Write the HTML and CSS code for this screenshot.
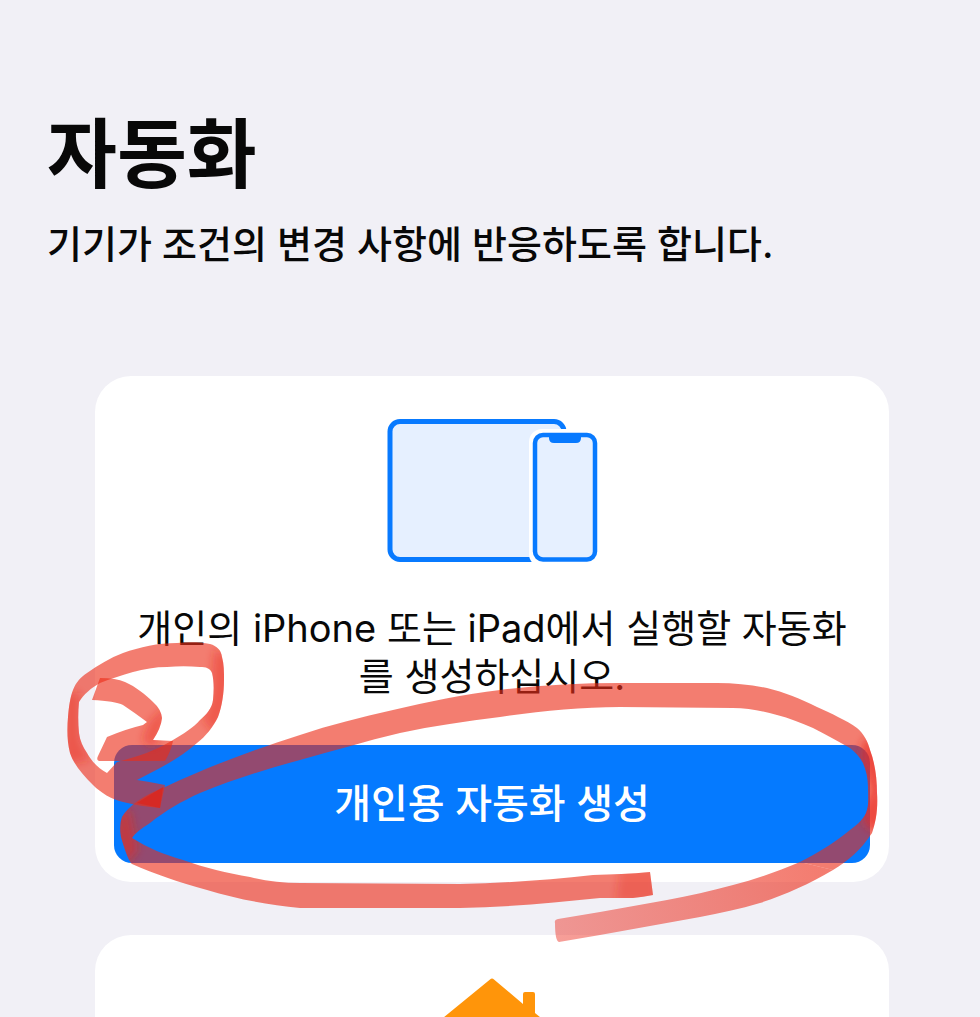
FILE: index.html
```html
<!DOCTYPE html>
<html lang="ko">
<head>
  <meta charset="UTF-8" />
  <meta name="viewport" content="width=device-width, initial-scale=1" />
  <title>자동화</title>
  <link rel="stylesheet" href="styles.css">
</head>
<body>
  <main class="page">
    <header class="intro">
      <h1>자동화</h1>
      <p>기기가 조건의 변경 사항에 반응하도록 합니다.</p>
    </header>

    <div class="cards">
      <section class="card">
        <svg class="devices" width="212" height="144" viewBox="0 0 212 144" aria-hidden="true">
          <rect x="4" y="2.500" width="174" height="138" rx="10" fill="#e6f0ff" stroke="#087aff" stroke-width="5" />
          <rect x="143" y="10" width="72" height="138" rx="13" fill="#fff" />
          <rect x="149" y="16" width="60" height="124.500" rx="8" fill="#e6f0ff" stroke="#087aff" stroke-width="4.500" />
          <path d="M163 16h32v3q0 5-5 5h-22q-5 0-5-5z" fill="#087aff" />
        </svg>
        <p class="description">개인의 iPhone 또는 iPad에서 실행할 자동화를 생성하십시오.</p>
        <button class="create-btn" type="button">개인용 자동화 생성</button>
      </section>

      <section class="card">
        <svg class="home" width="140" height="110" viewBox="0 0 140 110" aria-hidden="true">
          <path d="M68 1.500q2-2 4 0L101 26V16q0-2 2-2h8q2 0 2 2v19l22 18v4h-12v53H17V57H5v-4z" fill="#ff950a" />
        </svg>
      </section>
    </div>

    <!-- Red marker strokes -->
    <svg class="marker" width="980" height="1017" viewBox="0 0 980 1017" aria-hidden="true">
      <defs>
        <linearGradient id="fade" gradientUnits="userSpaceOnUse" x1="555" y1="930" x2="815" y2="866">
          <stop offset="0" stop-color="#ec2d20" stop-opacity=".46" />
          <stop offset="1" stop-color="#ec2d19" stop-opacity=".62" />
        </linearGradient>
        <filter id="soft" x="-50%" y="-50%" width="200%" height="200%">
          <feGaussianBlur stdDeviation="4" />
        </filter>
        <path id="ring" d="M165 785L160 808C147 807 135 805 123 802C111 799 101 793 93 785C83 775 74 765 70 753C67 741 67 729 68 717C69 706 70 698 73 690C76 682 81 677 87 673C98 665 110 658 123 653C140 647 158 643 177 643C189 642 200 642 210 644C217 646 221 650 222 657C224 664 224 672 224 680C224 693 222 706 218 717C213 727 206 736 197 743C186 753 173 761 160 768L137 780Q151 782 165 785ZM117 762C137 757 157 750 173 740C183 734 193 728 200 720C207 714 212 708 213 700C214 690 214 681 212 673C210 668 206 667 200 667C189 666 178 666 167 667C155 667 144 669 133 672C122 675 110 679 100 683C91 688 84 694 79 702C78 712 78 723 79 733C80 741 83 747 87 753C92 762 99 769 107 773Z" />
        <path id="arrow" d="M100 678Q116 678 125 682C136 687 145 694 153 702Q161 709 162 718Q161 728 153 740L173 741Q171 751 165 761L99 761Q96 760 98 756L107 737Q126 729 143 725L147 722Q135 713 123 705Q115 701 92 700Q96 689 100 678Z" />
        <path id="loop" d="M165 787C210 766 255 749 300 735C330 725 361 717 393 710C428 702 464 694 500 690C540 685 580 683 620 683L717 683C735 683 751 685 767 688C784 692 801 699 817 707C832 714 846 720 857 728C864 734 868 742 870 750C875 763 877 779 877 793C878 809 876 821 872 833C861 850 848 861 833 870L800 862C818 853 834 843 850 830C858 824 865 818 867 810C869 803 868 795 868 787C868 778 866 770 863 763C860 757 855 752 850 748C838 741 826 735 813 728C801 723 789 718 777 715C763 711 748 708 733 708L620 707C580 707 540 711 500 717C466 721 433 726 400 733C366 741 333 751 300 760C266 769 232 780 200 793C182 801 165 811 150 823C142 828 135 833 132 838C148 848 165 855 183 860C205 868 227 873 250 877C266 881 283 883 300 883L460 884C505 883 549 880 593 875C612 874 631 874 650 872L653 895Q643 897 633 898L600 898C553 903 507 907 460 908L300 908C268 905 237 899 207 890C178 882 155 874 132 864Q128 861 121 837Q119 825 122 817Q132 800 165 787Z" />
        <clipPath id="strokes">
          <use href="#ring" clip-rule="evenodd" />
          <use href="#arrow" />
          <use href="#loop" />
        </clipPath>
      </defs>
      <g fill="#ec2d19" fill-opacity=".62">
        <use href="#ring" fill-rule="evenodd" />
        <use href="#arrow" />
        <use href="#loop" />
      </g>
      <path d="M833 870C809 884 785 895 760 903C740 909 720 913 700 917L600 935L559 942Q555 941 555 923Q554 920 558 919L600 912L667 900C689 896 711 891 733 885C756 879 779 871 800 862Z" fill="url(#fade)" />
      <path d="M163 787L160 808L137 803Z" fill="#dd2018" fill-opacity=".6" />
      <!-- Denser ink where the pen turns -->
      <g clip-path="url(#strokes)">
        <g fill="#e92a1a" filter="url(#soft)">
          <path d="M620 868H658V902H616Z" fill-opacity=".3" />
          <path d="M214 650L232 655V700L216 735L203 720Q214 696 212 672Z" fill-opacity=".4" />
          <path d="M64 693H80V740L90 760L64 765Z" fill-opacity=".4" />
          <path d="M864 738L882 745V833L866 827L862 812L872 790L860 757Z" fill-opacity=".6" />
          <path d="M118 811H130L138 850L126 864L116 840Z" fill-opacity=".5" />
          <path d="M149 722L166 705V722L154 748L142 741Z" fill-opacity=".4" />
        </g>
      </g>
    </svg>
  </main>
</body>
</html>
```

FILE: styles.css
```css
* {
  margin: 0;
  padding: 0;
  box-sizing: border-box;
}

body {
  background: #f1f0f6;
  color: #080808;
  font-family: Inter, 'Noto Sans CJK KR', sans-serif;
}

.page {
  position: relative;
  height: 100vh;
  padding: 100px 47px 0;
  overflow: hidden;
}

.intro h1 {
  font-size: 76px;
  line-height: 108px;
  font-weight: 700;
}

.intro p {
  margin-top: 12px;
  font-size: 38px;
  line-height: 48px;
  font-weight: 500;
}

.cards {
  display: flex;
  flex-direction: column;
  gap: 53px;
  margin-top: 108px;
  padding: 0 44px 0 48px;
}

.card {
  display: flex;
  flex-direction: column;
  align-items: center;
  padding: 43px 19px 19px;
  background: #fff;
  border-radius: 36px;
}

.description {
  margin: 41px 0 45px;
  padding: 0 18px;
  font-size: 38px;
  line-height: 48px;
  text-align: center;
}

.create-btn {
  width: 100%;
  height: 118px;
  padding-bottom: 6px;
  border: none;
  border-radius: 18px;
  background: #057aff;
  color: #fff;
  font-family: inherit;
  font-size: 40px;
  font-weight: 500;
  cursor: pointer;
}

.marker {
  position: absolute;
  top: 0;
  left: 0;
  pointer-events: none;
}
```
